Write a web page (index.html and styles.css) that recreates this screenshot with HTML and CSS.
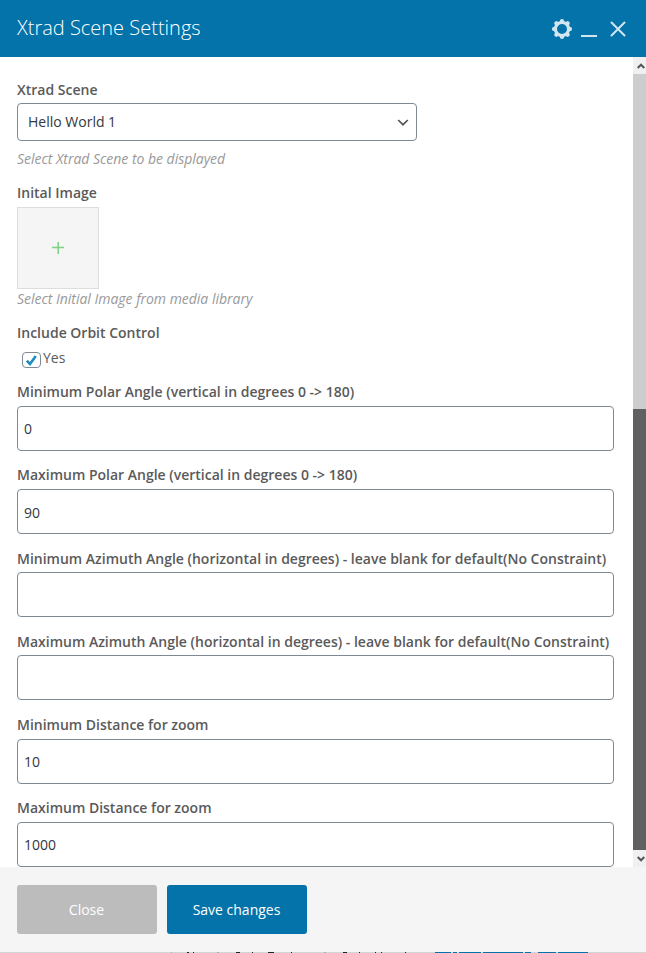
FILE: index.html
```html
<!DOCTYPE html>
<html lang="en">
<head>
<meta charset="utf-8">
<title>Xtrad Scene Settings</title>
<link rel="stylesheet" href="styles.css">
</head>
<body>
<div class="panel">
  <header class="panel-header">
    <h1>Xtrad Scene Settings</h1>
    <div class="controls">
      <svg class="gear" viewBox="0 0 20 20" width="20" height="20"><g fill="#d3e6f0"><path fill-rule="evenodd" d="M10 1.9a8.1 8.1 0 1 0 0 16.2a8.1 8.1 0 1 0 0-16.2zM10 5a5 5 0 1 1 0 10a5 5 0 1 1 0-10z"/><path id="tooth" d="M7.5 3l.9-2.6q1.6-.8 3.2 0l.9 2.6z"/><use href="#tooth" transform="rotate(45 10 10)"/><use href="#tooth" transform="rotate(90 10 10)"/><use href="#tooth" transform="rotate(135 10 10)"/><use href="#tooth" transform="rotate(180 10 10)"/><use href="#tooth" transform="rotate(225 10 10)"/><use href="#tooth" transform="rotate(270 10 10)"/><use href="#tooth" transform="rotate(315 10 10)"/></g></svg>
      <svg class="minimize" viewBox="0 0 16 16" width="16" height="16"><path d="M0 14h16" stroke="#d3e6f0" stroke-width="2"/></svg>
      <svg class="close" viewBox="0 0 16 16" width="16" height="16"><path d="M1.5 1.5l13 13M14.5 1.5l-13 13" stroke="#d3e6f0" stroke-width="2" stroke-linecap="round"/></svg>
    </div>
  </header>
  <div class="panel-body">
    <form class="fields">
      <div class="field scene">
        <label>Xtrad Scene</label>
        <div class="select"><span>Hello World 1</span><svg viewBox="0 0 12 8" width="12" height="8"><path d="M1.2 2L6 6.7l4.8-4.7" fill="none" stroke="#555" stroke-width="1.7"/></svg></div>
        <p class="hint">Select Xtrad Scene to be displayed</p>
      </div>
      <div class="field image">
        <label>Inital Image</label>
        <div class="picker"><svg viewBox="0 0 12 12" width="12" height="12"><path d="M0 5.6h12M6.2 0v12" stroke="#7bd184" stroke-width="1.5"/></svg></div>
        <p class="hint">Select Initial Image from media library</p>
      </div>
      <div class="field orbit">
        <label>Include Orbit Control</label>
        <div class="check"><span class="box"><svg viewBox="0 0 12 12" width="12" height="12"><path d="M.8 6.7L4 10L9.8 2" fill="none" stroke="#1e8cbe" stroke-width="2.6"/></svg></span><span>Yes</span></div>
      </div>
      <div class="field text"><label>Minimum Polar Angle (vertical in degrees 0 -&gt; 180)</label><div class="input">0</div></div>
      <div class="field text roomy"><label>Maximum Polar Angle (vertical in degrees 0 -&gt; 180)</label><div class="input">90</div></div>
      <div class="field text tight"><label>Minimum Azimuth Angle (horizontal in degrees) - leave blank for default(No Constraint)</label><div class="input"></div></div>
      <div class="field text tight"><label>Maximum Azimuth Angle (horizontal in degrees) - leave blank for default(No Constraint)</label><div class="input"></div></div>
      <div class="field text"><label>Minimum Distance for zoom</label><div class="input">10</div></div>
      <div class="field text"><label>Maximum Distance for zoom</label><div class="input">1000</div></div>
    </form>
    <div class="scrollbar">
      <div class="arrow"><svg viewBox="0 0 8 6" width="8" height="6"><path d="M.7 5L4 1.7L7.3 5" fill="none" stroke="#555" stroke-width="2"/></svg></div>
      <div class="thumb"></div>
      <div class="track"></div>
      <div class="arrow"><svg viewBox="0 0 8 6" width="8" height="6"><path d="M.7 1L4 4.3L7.3 1" fill="none" stroke="#555" stroke-width="2"/></svg></div>
    </div>
  </div>
  <footer class="panel-footer">
    <div class="button secondary">Close</div>
    <div class="button primary">Save changes</div>
  </footer>
  <svg class="page-edge" viewBox="0 0 646 1" width="646" height="1" shape-rendering="crispEdges"><path d="M187 .5h2M193 .5h1M236 .5h4M252 .5h1M268 .5h6M291 .5h1M343 .5h4M359 .5h1M375 .5h1M381 .5h1M405 .5h1" stroke="#222" stroke-width="1"/><path d="M171 .5h1M217 .5h2M324 .5h2" stroke="#aaa" stroke-width="1"/><path d="M435 .5h16M453 .5h4M459 .5h22M483 .5h40M525 .5h6M538 .5h18M558 .5h30" stroke="#0473aa" stroke-width="1"/></svg>
</div>
</body>
</html>
```

FILE: styles.css
```css
* { box-sizing: border-box; }

body {
  margin: 0;
  background: #fff;
  color: #5a5a5a;
  font: 14px/20px "Open Sans", sans-serif;
}

svg { display: block; }

.panel {
  display: flex;
  flex-direction: column;
  width: 646px;
  height: 953px;
  overflow: hidden;
}

.panel-header {
  display: flex;
  justify-content: space-between;
  height: 57px;
  padding: 0 20px 0 17px;
  background: #0473aa;
}

h1 {
  margin: 0;
  color: #fff;
  font-size: 20px;
  font-weight: 300;
  line-height: 56px;
}

.controls { display: flex; align-items: flex-start; padding-top: 19px; }
.minimize { margin: 3px 13px 0 9px; }
.close { margin-top: 2px; }

.panel-body {
  display: flex;
  justify-content: space-between;
  height: 810px;
}

.fields {
  width: 614px;
  padding: 23px 0 0 17px;
}

label {
  display: block;
  font-weight: 600;
  white-space: nowrap;
}

.hint {
  margin: 0;
  color: #999;
  font-style: italic;
  letter-spacing: -0.02px;
}

.scene { height: 103px; }
.image { height: 140px; }
.orbit { height: 59px; }
.text { height: 83px; }
.roomy { height: 84px; }

.select {
  display: flex;
  align-items: center;
  justify-content: space-between;
  width: 400px;
  height: 38px;
  margin: 3px 0 8px;
  padding: 0 7px 0 10px;
  border: 1px solid #7e8993;
  border-radius: 4px;
  color: #32373c;
}

.picker {
  display: flex;
  align-items: center;
  justify-content: center;
  width: 82px;
  height: 82px;
  margin-top: 4px;
  background: #f5f5f5;
  border: 1px solid #ddd;
}

.check { display: flex; padding: 5px 0 0 5px; }

.box {
  display: flex;
  align-items: center;
  justify-content: center;
  width: 19px;
  height: 16px;
  margin: 4px 2px 0 0;
  border: 1px solid #7e8993;
  border-radius: 4px;
}

.input {
  height: 45px;
  margin-top: 4px;
  padding: 0 6px;
  border: 1px solid #7e8993;
  border-radius: 4px;
  color: #32373c;
  line-height: 44px;
}

.roomy .input { line-height: 46px; }
.tight .input { margin-top: 3px; }

.scrollbar {
  display: flex;
  flex-direction: column;
  width: 13px;
}

.arrow {
  display: flex;
  align-items: center;
  justify-content: center;
  height: 17px;
  padding-left: 2px;
  background: #f0f0f0;
}

.thumb { height: 335px; background: #cdcdcd; }
.track { flex: 1; background: #606060; }

.panel-footer {
  display: flex;
  gap: 10px;
  height: 85px;
  padding: 18px 17px;
  background: #f5f5f5;
}

.button {
  width: 140px;
  height: 49px;
  padding-right: 1px;
  border-radius: 3px;
  color: #fff;
  line-height: 49px;
  text-align: center;
}

.secondary { background: #bcbcbc; }
.primary { background: #0473aa; }
.page-edge { background: #d5d5d5; }
```
